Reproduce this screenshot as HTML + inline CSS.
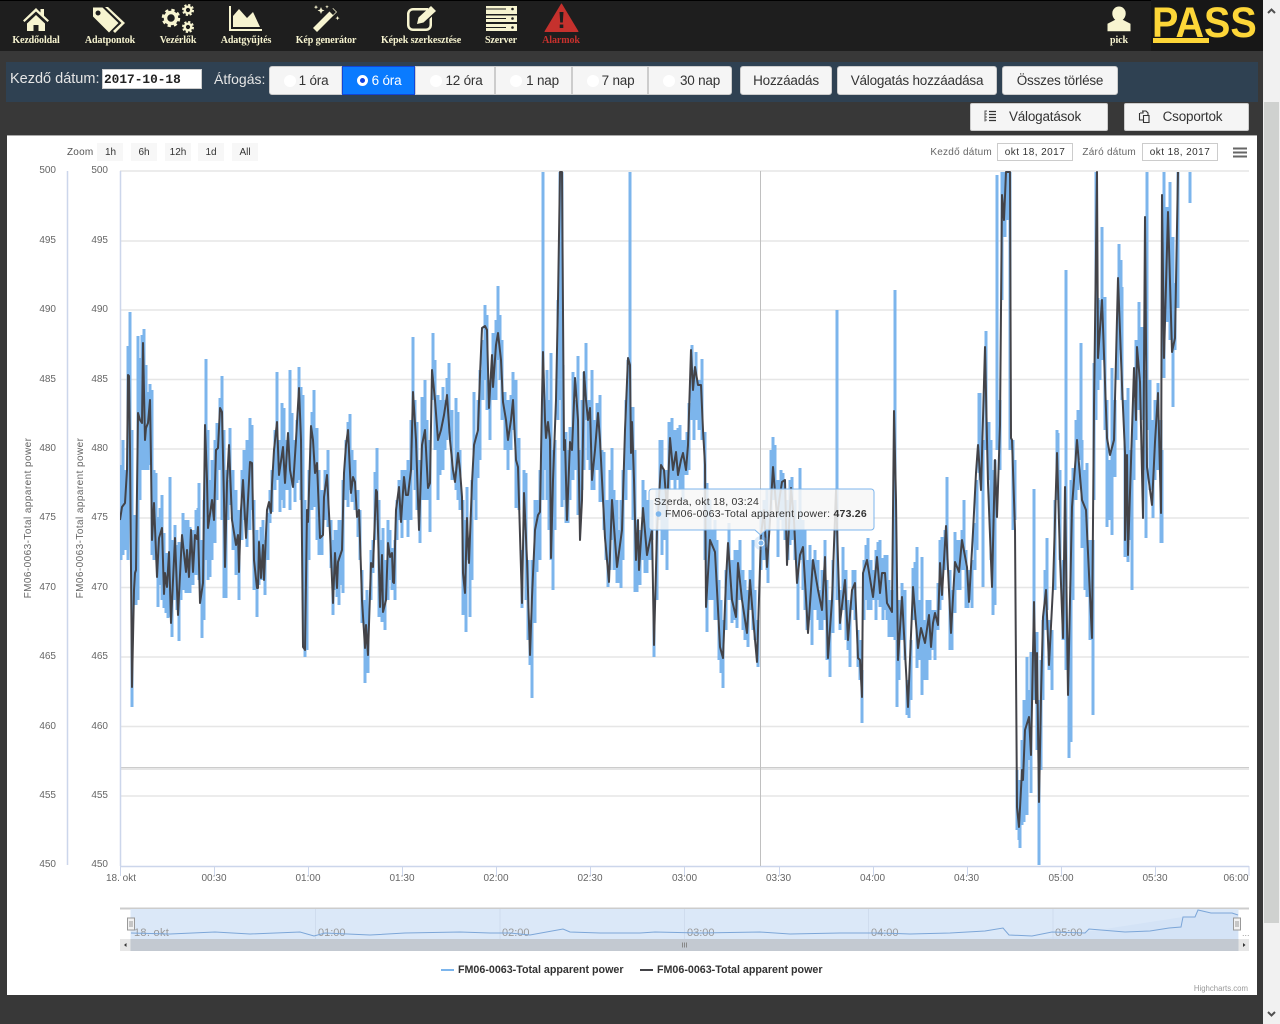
<!DOCTYPE html>
<html lang="hu"><head><meta charset="utf-8"><title>PASS</title>
<style>
html,body{margin:0;padding:0;width:1280px;height:1024px;overflow:hidden;background:#383838;font-family:"Liberation Sans",sans-serif}
div{box-sizing:border-box;position:absolute}
.nav{font:bold 10px "Liberation Serif",serif;color:#f7f4d0;top:35px;height:12px;line-height:12px;text-align:center;white-space:nowrap;letter-spacing:-.1px}
.btn{top:66px;height:29px;line-height:27px;background:#f5f5f5;border:1px solid #ccc;color:#333;font-size:13.500px;text-align:center;white-space:nowrap;letter-spacing:-.2px}
.rd{position:absolute;left:14px;top:8px;width:12px;height:12px;border-radius:50%;background:#fff}
svg text{font-family:"Liberation Sans",sans-serif}
</style></head><body>
<div style="left:0;top:0;width:1280px;height:51px;background:#1e1e1e;border-top:1px solid #000"></div>
<svg style="position:absolute;left:0;top:0" width="1262" height="51" viewBox="0 0 1262 51">
<g fill="#f7f4d0">
<path d="M36 8 23 20.500l1.500 1.500L36 11.500 47.500 22l1.500-1.500-5-4.700V9h-3.500v3.500zM27 23.500 36 15l9 8.500V31H38.500v-6h-5v6H27z"/>
<path d="M93 7.500h9.500l16 15.500-9.500 9.500L93 16.500zM98 10.500a2.500 2.500 0 1 0 .1 0zM105 7h3l17 16-10 10-2-2 8.500-8z" fill-rule="evenodd"/>
<path d="M229 6h2v23h31v2h-33z"/><path d="M233 27V16l6-7 8 9 6-6 7 15z"/>
<path d="M313 28 333 8l4 4-20 20zM329.500 11.500l3.500 3.500 3-3-3.500-3.500z" fill-rule="evenodd"/>
<path d="M321 7l1 2.500 2.500 1-2.500 1-1 2.500-1-2.500-2.500-1 2.500-1zM316 5l.6 1.500 1.500.6-1.500.6-.6 1.500-.6-1.500-1.500-.6 1.500-.6zM337.500 16l.6 1.500 1.500.6-1.500.6-.6 1.500-.6-1.500-1.500-.6 1.500-.6zM327 5l.5 1.300 1.300.5-1.300.5-.5 1.300-.5-1.300-1.300-.5 1.300-.5z"/>
<path d="M413 8h15v2.500h-15a3.500 3.500 0 0 0-3.500 3.500v11a3.500 3.500 0 0 0 3.500 3.500h13a3.500 3.500 0 0 0 3.500-3.500v-6l2.500-2.500V25a6 6 0 0 1-6 6h-13a6 6 0 0 1-6-6V14a6 6 0 0 1 6-6z"/>
<path d="M417 24l1.500-6.500L431 6l5 5-12.500 11.500z"/>
<path d="M486 6h31v8h-31zM486 15.500h31v6.500h-31zM486 24h31v7h-31z"/>
<path d="M1119 6.500a6.700 6.700 0 0 1 6.700 7c0 2.700-1.400 5.200-3 6.300l7.800 4v7.500h-23v-7.500l7.800-4c-1.600-1.100-3-3.600-3-6.300a6.700 6.700 0 0 1 6.700-7z"/>
</g>
<g fill="none" stroke="#f7f4d0">
<circle cx="171" cy="18" r="5.500" stroke-width="3.500"/>
<circle cx="171" cy="18" r="8" stroke-width="2.500" stroke-dasharray="3.300 3"/>
<circle cx="188" cy="10" r="3.300" stroke-width="2.400"/>
<circle cx="188" cy="10" r="5" stroke-width="2" stroke-dasharray="2.200 1.730"/>
<circle cx="188" cy="27" r="3.300" stroke-width="2.400"/>
<circle cx="188" cy="27" r="5" stroke-width="2" stroke-dasharray="2.200 1.730"/>
</g>
<g fill="#1e1e1e"><circle cx="512.500" cy="9" r="1.300"/><circle cx="512.500" cy="18.500" r="1.300"/><circle cx="512.500" cy="27.500" r="1.300"/><path d="M486 8.500h20v1h-20zM486 18h20v1h-20zM486 27h20v1h-20z"/></g>
<path d="M561.500 4 578 31.500h-33z" fill="#c5312d" stroke="#c5312d" stroke-width="1" stroke-linejoin="round"/>
<path d="M559.500 12h4l-.7 10.500h-2.600zM559.700 24.500h3.600v3.500h-3.600z" fill="#1e1e1e"/>
</svg>
<div class="nav" style="left:0;width:72px">Kezdőoldal</div>
<div class="nav" style="left:70px;width:80px">Adatpontok</div>
<div class="nav" style="left:148px;width:60px">Vezérlők</div>
<div class="nav" style="left:211px;width:70px">Adatgyűjtés</div>
<div class="nav" style="left:276px;width:100px">Kép generátor</div>
<div class="nav" style="left:361px;width:120px">Képek szerkesztése</div>
<div class="nav" style="left:471px;width:60px">Szerver</div>
<div class="nav" style="left:531px;width:60px;color:#c5312d">Alarmok</div>
<div class="nav" style="left:1099px;width:40px">pick</div>
<div style="left:1151px;top:-1px;width:112px;height:52px;background:#171717;overflow:hidden">
<div style="left:1px;top:0;font:bold 43px/48px 'Liberation Sans',sans-serif;color:#fdd638;white-space:nowrap;width:130px;transform:scaleX(.92);transform-origin:0 0">PASS</div>
<div style="left:2px;top:39px;width:56px;height:5px;background:#fdd638"></div>
</div>

<div style="left:6px;top:62px;width:1252px;height:40px;background:#2f4152"></div>
<div style="left:10px;top:70px;color:#e6e6e6;font-size:14.500px;line-height:18px;white-space:nowrap">Kezdő dátum:</div>
<div style="left:102px;top:69px;width:100px;height:20px;background:#fff;border:1px solid #ccc;font:bold 12.800px/19px 'Liberation Mono',monospace;color:#222;padding-left:1px;white-space:nowrap">2017-10-18</div>
<div style="left:214px;top:70px;color:#e6e6e6;font-size:14px;line-height:18px;white-space:nowrap">Átfogás:</div>
<div class="btn" style="left:269px;width:73px;padding-left:16px;border-radius:3px 0 0 3px"><span class="rd"></span>1 óra</div>
<div class="btn" style="left:342px;width:73px;padding-left:16px;background:#0a7bff;border:1px solid #1346d6;color:#fff"><span class="rd" style="left:14px;width:11px;height:11px;border:3px solid #fff;background:#1040e0;box-sizing:border-box"></span>6 óra</div>
<div class="btn" style="left:415px;width:80px;padding-left:18px"><span class="rd"></span>12 óra</div>
<div class="btn" style="left:495px;width:77px;padding-left:18px"><span class="rd"></span>1 nap</div>
<div class="btn" style="left:572px;width:76px;padding-left:16px"><span class="rd"></span>7 nap</div>
<div class="btn" style="left:648px;width:84px;padding-left:20px;border-radius:0 3px 3px 0"><span class="rd"></span>30 nap</div>
<div class="btn" style="left:740px;width:92px;border-radius:3px">Hozzáadás</div>
<div class="btn" style="left:837px;width:160px;border-radius:3px">Válogatás hozzáadása</div>
<div class="btn" style="left:1002px;width:116px;border-radius:3px">Összes törlése</div>
<div class="btn" style="left:970px;top:103px;width:138px;height:28px;line-height:25px;padding-left:12px;border-radius:2px">Válogatások</div>
<div class="btn" style="left:1124px;top:103px;width:125px;height:28px;line-height:25px;padding-left:12px;border-radius:2px">Csoportok</div>
<svg style="position:absolute;left:980px;top:106px" width="180" height="22" viewBox="980 106 180 22">
<path d="M989 111.500h7M989 114.500h7M989 117.500h7M989 120.500h7" stroke="#333" stroke-width="1.300"/><path d="M985 110.500v11M985.500 111h1.500M985.500 114h1.500M985.500 117h1.500M985.500 120h1.500" stroke="#555" stroke-width="1"/>
<path d="M1139.500 113v7h4M1142 111h4l2 2v2M1143.500 115.500h5.500v7h-5.500zM1140 113h3v-2" fill="none" stroke="#333" stroke-width="1.100"/>
</svg>

<div style="left:7px;top:135px;width:1250px;height:860px;background:#fff;border-top:1px solid #aaa"></div>

<svg style="position:absolute;left:0;top:0" width="1262" height="1000" viewBox="0 0 1262 1000">
<defs><clipPath id="pl"><rect x="120" y="171" width="1129" height="695"/></clipPath></defs>
<g font-size="10" fill="#333">
<text x="67" y="155" fill="#555" letter-spacing=".2">Zoom</text>
<g fill="#f7f7f7"><rect x="97" y="143" width="26" height="18"/><rect x="131" y="143" width="26" height="18"/><rect x="165" y="143" width="26" height="18"/><rect x="198" y="143" width="26" height="18"/><rect x="232" y="143" width="26" height="18"/></g>
<g text-anchor="middle"><text x="110.500" y="155">1h</text><text x="144" y="155">6h</text><text x="178" y="155">12h</text><text x="211" y="155">1d</text><text x="245" y="155">All</text></g>
<g fill="#666"><text x="992" y="155" text-anchor="end" font-size="10" letter-spacing=".25">Kezdő dátum</text><text x="1136" y="155" text-anchor="end" letter-spacing=".25">Záró dátum</text></g>
<rect x="997.500" y="143.500" width="75" height="17" fill="#fff" stroke="#ccc"/><rect x="1142.500" y="143.500" width="75" height="17" fill="#fff" stroke="#ccc"/>
<text x="1035" y="155" text-anchor="middle" letter-spacing=".45">okt 18, 2017</text><text x="1180" y="155" text-anchor="middle" letter-spacing=".45">okt 18, 2017</text>
</g>
<path d="M1233 148.500h14M1233 152.500h14M1233 156.500h14" stroke="#666" stroke-width="2"/>

<path d="M120 171H1249M120 241H1249M120 310H1249M120 379.500H1249M120 449H1249M120 518H1249M120 587.500H1249M120 657H1249M120 726.500H1249M120 796H1249" stroke="#e6e6e6" stroke-width="1.500"/>
<path d="M120 767.500H1249M120 769H1249" stroke="#ccc" stroke-width="1"/>
<path d="M67.500 171V865M120.500 171V866M120 866.500H1249" stroke="#ccd6eb" stroke-width="1.500" fill="none"/>
<path d="M120.500 866v10M214.500 866v10M308.500 866v10M402.500 866v10M496.500 866v10M590.500 866v10M684.500 866v10M779.500 866v10M873.500 866v10M967.500 866v10M1061.500 866v10M1155.500 866v10M1249 866v10" stroke="#ccd6eb"/>
<g font-size="10" fill="#666" text-anchor="end">
<text x="56" y="173">500</text><text x="56" y="243">495</text><text x="56" y="312">490</text><text x="56" y="382">485</text><text x="56" y="451">480</text><text x="56" y="520">475</text><text x="56" y="590">470</text><text x="56" y="659">465</text><text x="56" y="729">460</text><text x="56" y="798">455</text><text x="56" y="867">450</text>
<text x="108" y="173">500</text><text x="108" y="243">495</text><text x="108" y="312">490</text><text x="108" y="382">485</text><text x="108" y="451">480</text><text x="108" y="520">475</text><text x="108" y="590">470</text><text x="108" y="659">465</text><text x="108" y="729">460</text><text x="108" y="798">455</text><text x="108" y="867">450</text>
</g>
<g font-size="10" fill="#666" text-anchor="middle" letter-spacing=".43"><text transform="translate(31 518) rotate(-90)">FM06-0063-Total apparent power</text><text transform="translate(83 518) rotate(-90)">FM06-0063-Total apparent power</text></g>
<g font-size="10" fill="#666" text-anchor="middle"><text x="121" y="881">18. okt</text><text x="214" y="881">00:30</text><text x="308" y="881">01:00</text><text x="402" y="881">01:30</text><text x="496" y="881">02:00</text><text x="590" y="881">02:30</text><text x="684.500" y="881">03:00</text><text x="778.500" y="881">03:30</text><text x="872.500" y="881">04:00</text><text x="966.500" y="881">04:30</text><text x="1061" y="881">05:00</text><text x="1155" y="881">05:30</text><text x="1236" y="881" text-anchor="middle">06:00</text></g>

<path d="M760.500 171V866" stroke="#c0c0c0" stroke-width="1"/>
<g clip-path="url(#pl)">
<path fill="none" stroke="#7cb5ec" stroke-width="3" d="M121 465V560M123 440V555M125 470V550M128 346V560M130 312V500M132 430V707M134 515V600M136 515V605M138 336V600M140 358V500M142 335V470M144 329V470M146 365V470M148 392V470M150 384V465M152 390V555M154 470V560M156 473V555M158 517V607M160 508V585M162 495V600M164 533V608M166 553V613M168 553V618M170 477V617M172 540V637M175 525V600M177 545V610M179 542V641M181 560V600M183 513V590M186 520V593M188 520V593M190 527V593M193 530V585M196 510V575M198 508V570M199 483V580M202 540V638M204 500V620M206 359V560M208 430V580M210 480V577M212 460V560M215 440V543M217 423V500M220 398V470M222 376V520M224 430V598M226 470V598M228 480V520M230 428V505M233 470V550M236 490V575M239 510V600M242 470V540M244 450V520M247 440V547M250 418V530M252 425V510M254 500V590M257 530V617M259 540V585M261 527V580M263 520V580M265 540V595M268 513V560M270 490V523M272 470V512M275 430V490M277 372V480M280 440V512M282 403V500M284 408V508M287 440V490M290 370V510M292 413V480M295 440V502M297 420V483M299 367V480M301 387V500M303 395V600M305 500V657M307 510V650M309 470V560M311 440V500M312 412V510M314 390V507M317 428V540M319 470V555M322 490V555M325 470V520M328 450V527M331 520V568M333 540V615M335 530V590M337 530V597M339 520V605M341 520V585M343 480V593M346 440V500M348 422V507M350 414V490M352 450V502M355 460V510M358 490V537M360 510V560M362 570V623M365 600V683M367 590V640M368 620V673M371 550V600M373 540V573M375 472V540M377 448V520M379 500V617M382 540V622M383 528V600M385 560V630M388 520V600M390 530V580M392 548V590M395 540V600M397 500V540M399 480V520M402 470V538M405 470V520M408 460V537M411 420V520M413 337V470M415 400V490M417 422V510M420 460V543M422 397V500M425 380V500M427 420V500M430 440V532M433 333V400M435 360V450M438 395V500M440 400V475M443 387V470M445 400V450M447 378V440M449 363V430M452 410V480M456 398V490M458 412V500M460 450V510M463 500V615M466 520V632M467 487V560M470 540V617M472 480V580M474 392V500M476 440V520M478 400V478M480 370V460M483 340V400M485 305V380M487 315V410M490 380V440M493 333V400M496 320V400M498 286V360M500 315V380M502 340V420M505 392V450M508 400V470M511 395V450M513 372V430M516 380V508M519 438V510M522 550V608M524 470V530M526 473V600M528 560V640M530 620V665M532 560V698M535 500V623M537 500V572M540 470V560M543 172V500M545 400V470M547 370V500M549 400V530M551 353V560M553 450V590M555 440V530M558 300V420M560 172V400M562 172V507M563 365V500M566 432V523M568 450V523M570 427V500M573 372V480M575 400V470M578 356V515M580 450V515M582 400V490M584 372V470M586 343V420M588 400V460M590 400V470M592 370V490M594 420V490M597 403V470M600 395V502M602 450V502M604 452V530M606 500V560M608 500V587M610 470V570M612 448V540M614 490V570M617 500V583M619 530V583M621 500V588M623 470V560M626 400V500M628 360V470M630 172V470M633 407V520M635 450V592M637 520V592M640 530V585M643 480V560M645 490V573M647 500V573M650 500V560M652 500V540M654 600V657M657 490V600M660 440V520M662 440V555M664 470V540M667 470V570M669 422V490M672 418V480M675 430V490M678 428V480M680 425V490M683 440V500M685 440V475M687 432V475M689 403V470M692 345V420M694 370V440M696 352V420M699 380V430M702 359V440M705 432V560M707 483V632M710 500V600M713 530V600M715 520V620M717 540V620M719 580V660M721 600V673M723 620V688M726 570V630M729 523V600M732 560V623M735 550V620M737 550V628M740 540V600M743 570V630M745 580V640M748 590V647M750 570V610M753 540V630M755 590V640M758 620V667M761 510V570M764 500V560M767 490V570M768 510V583M771 450V510M773 437V500M775 445V500M778 480V557M781 470V520M783 473V530M785 490V540M788 500V560M790 480V545M792 477V540M795 500V560M798 520V620M800 468V560M803 520V590M805 530V610M807 560V630M810 545V620M812 560V645M815 550V610M818 560V620M820 590V630M822 570V630M825 540V620M827 580V660M830 600V677M833 560V633M837 310V600M840 590V630M843 547V610M846 570V640M848 600V650M850 610V667M853 570V610M855 570V620M858 630V667M860 640V680M862 670V723M864 560V620M866 545V600M868 538V610M871 560V610M874 570V600M876 550V620M878 542V600M880 540V607M883 558V620M885 555V610M887 555V620M889 580V637M892 590V637M895 290V640M897 640V707M899 600V680M902 583V640M905 590V660M907 680V715M909 680V718M911 640V700M913 568V620M915 562V620M917 547V668M920 600V660M922 557V695M925 620V680M927 600V680M930 600V660M932 610V650M935 610V660M938 583V630M940 540V610M942 537V600M945 530V570M947 477V560M950 570V650M952 590V650M955 532V613M957 540V590M960 540V590M962 530V570M964 500V570M966 550V608M968 570V608M970 570V600M972 560V608M975 523V570M977 480V550M979 393V473M980 393V480M983 440V587M986 331V450M989 422V480M991 440V560M993 470V615M995 460V605M997 175V450M1000 400V470M1002 172V300M1005 172V237M1007 172V220M1010 172V450M1013 440V530M1015 460V520M1017 770V830M1019 780V840M1020 800V848M1022 740V825M1024 700V822M1027 657V815M1029 690V760M1031 652V793M1034 489V700M1037 632V750M1039 700V865M1041 660V770M1043 620V700M1045 570V630M1047 538V610M1049 620V670M1052 630V690M1055 500V590M1057 430V480M1058 433V500M1060 470V560M1063 560V640M1066 270V670M1069 640V758M1071 480V742M1073 468V600M1076 420V500M1078 410V490M1081 343V460M1082 440V548M1085 470V590M1087 463V597M1090 540V640M1093 540V715M1094 363V500M1096 172V420M1098 298V390M1100 300V380M1102 227V360M1105 297V430M1107 400V527M1109 460V520M1112 368V535M1115 400V477M1118 300V380M1119 244V340M1121 260V350M1122 287V400M1125 400V557M1128 388V562M1130 450V540M1132 450V590M1134 400V480M1136 340V440M1139 302V410M1142 327V420M1144 370V470M1146 400V538M1147 172V430M1150 380V490M1153 420V518M1155 400V480M1158 383V470M1161 420V543M1162 450V543M1164 172V378M1167 207V322M1170 182V340M1173 237V407M1175 283V350M1178 172V308M1190 172V203"/>
<polyline fill="none" stroke="#434348" stroke-width="2" stroke-linejoin="round" points="120,520 122,507 125,503 127,470 128,375 129,376 130,450 132,687 134,590 135,573 136,570 138,413 140,420 142,423 143,343 145,440 146,428 148,423 150,400 151,460 152,540 154,503 157,577 159,538 162,528 164,594 165,573 167,587 169,552 171,623 175,538 178,615 182,535 186,572 187,550 189,577 191,530 193,572 195,535 197,539 198,527 200,603 203,583 205,425 207,480 208,528 212,500 214,520 216,450 218,448 220,408 222,412 224,500 225,567 227,483 229,445 232,520 236,545 238,535 239,572 241,510 243,480 246,538 250,462 252,463 254,560 257,588 258,588 259,542 261,578 263,545 264,580 267,510 269,502 271,513 272,485 274,450 277,422 279,475 283,447 285,483 288,433 290,470 293,487 296,440 299,388 301,440 303,647 305,650 307,510 308,522 311,426 313,440 315,473 317,463 320,538 323,535 324,497 327,475 330,533 333,603 335,553 337,588 338,562 342,550 344,473 346,445 348,430 351,493 353,477 355,482 357,517 359,510 362,600 365,648 366,625 368,655 371,563 373,567 376,490 377,492 380,607 382,555 383,612 386,600 388,543 390,557 392,553 393,582 394,583 396,510 399,487 401,522 404,477 406,495 408,495 411,470 413,392 416,440 419,530 422,445 425,430 428,488 430,483 432,370 435,400 438,440 441,430 444,415 447,395 450,440 453,470 455,482 458,453 460,470 462,497 463,573 465,593 467,518 469,563 472,483 474,445 478,430 480,375 482,328 485,326 487,330 489,408 492,355 493,387 496,345 498,333 501,360 503,402 506,420 508,440 511,420 513,400 516,460 518,467 522,603 524,493 527,560 530,655 532,597 535,530 538,515 540,512 542,400 543,352 545,420 546,438 548,422 550,440 551,558 553,480 556,400 558,300 560,172 562,172 564,450 565,440 567,520 570,442 572,450 575,378 578,420 580,540 582,500 584,372 586,400 588,420 590,408 592,480 595,450 598,413 600,440 602,480 605,538 609,582 612,500 617,567 622,530 625,430 628,358 630,365 631,453 632,422 634,480 636,560 638,520 639,570 643,508 647,555 652,530 654,645 657,530 661,465 664,470 667,510 670,438 673,470 676,452 678,475 681,460 683,453 686,470 688,445 691,350 693,390 695,367 698,385 701,385 703,430 705,465 706,607 710,540 715,552 720,647 723,658 726,580 728,543 732,600 736,617 738,563 742,600 747,633 750,580 753,617 757,662 761,535 764,510 767,567 770,520 773,467 777,517 780,495 782,482 785,480 787,565 791,488 794,520 797,583 800,555 803,547 808,633 813,560 818,590 822,610 825,557 828,658 832,600 836,490 838,560 840,623 845,580 848,640 852,590 855,583 858,658 860,660 862,697 863,573 867,560 873,597 877,557 880,593 882,573 885,573 887,603 892,612 894,411 896,500 898,660 902,597 908,707 913,587 918,648 921,628 925,643 929,615 931,647 933,623 935,613 938,625 940,563 942,595 946,526 951,633 955,562 959,572 962,540 967,567 969,602 973,532 976,473 978,445 981,490 985,347 987,440 988,483 992,587 995,460 997,517 1000,425 1002,195 1004,220 1006,172 1010,172 1011,438 1012,440 1015,530 1017,807 1019,827 1022,770 1023,780 1025,730 1029,717 1031,755 1034,602 1036,703 1037,653 1039,802 1041,697 1043,617 1046,590 1049,665 1053,587 1057,453 1060,557 1063,638 1065,487 1068,695 1072,507 1077,440 1082,500 1086,510 1092,638 1094,407 1097,172 1098,358 1102,300 1103,327 1107,438 1110,455 1114,440 1118,278 1122,385 1125,453 1125,540 1127,455 1128,555 1134,368 1136,420 1137,347 1140,382 1143,518 1145,217 1147,467 1152,505 1155,442 1158,393 1161,513 1162,195 1164,358 1168,212 1172,352 1175,338 1178,172"/>
</g>
<circle cx="761" cy="543" r="7" fill="#7cb5ec" opacity=".25"/><circle cx="761" cy="543" r="3" fill="#7cb5ec" stroke="#fff"/>
<path d="M649 492a3 3 0 0 1 3-3H871a3 3 0 0 1 3 3V527a3 3 0 0 1-3 3H766l-5.500 5-5.500-5H652a3 3 0 0 1-3-3z" fill="#f7f7f7" fill-opacity=".85" stroke="#7cb5ec"/>
<text x="654" y="505" font-size="10.500" fill="#333" letter-spacing=".25">Szerda, okt 18, 03:24</text>
<circle cx="658.500" cy="514" r="2.800" fill="#7cb5ec"/>
<text x="665" y="517" font-size="10.500" fill="#333" letter-spacing=".23">FM06-0063-Total apparent power: <tspan font-weight="bold">473.26</tspan></text>

<path d="M120 908.500H1249" stroke="#ccc" stroke-width="2"/>
<rect x="130.500" y="909" width="1108" height="30" fill="#dbe8f8"/>
<path d="M315.500 909v30M500 909v30M684.500 909v30M868.500 909v30M1053 909v30" stroke="#cfdcee"/>
<path fill="#cfe0f5" opacity=".6" d="M1183 917 1195 917 1198 910 1211 913 1232 913 1238 915V939H1040z"/>
<g font-size="11" fill="#999"><text x="134" y="936" letter-spacing=".3">18. okt</text><text x="318" y="936">01:00</text><text x="502" y="936">02:00</text><text x="687" y="936">03:00</text><text x="871" y="936">04:00</text><text x="1055" y="936">05:00</text></g>
<polyline fill="none" stroke="#7ca6d8" stroke-width="1" points="131,933 170,934 215,932 250,934 300,932 314,936 325,933 370,935 405,933 460,932 490,933 510,933 530,935 563,929 570,932 600,933 640,933 655,932 700,933 760,932 790,934 840,933 880,933 910,934 950,933 985,931 1003,928 1009,935 1032,936 1052,932 1085,933 1089,929 1125,932 1150,931 1169,928 1181,927 1183,917 1195,917 1198,910 1211,913 1232,913 1238,915"/>
<rect x="120" y="939" width="1129" height="12" fill="#c3c9d1"/>
<rect x="120" y="939" width="10.500" height="12" fill="#e6e6e6"/><rect x="1238.500" y="939" width="10.500" height="12" fill="#e6e6e6"/>
<path d="M126.500 943v4l-2.500-2zM1243 943v4l2.500-2z" fill="#333"/>
<path d="M682.500 942.500v5M684.500 942.500v5M686.500 942.500v5" stroke="#888"/>
<rect x="127.500" y="918" width="7" height="12" fill="#f2f2f2" stroke="#999"/><rect x="1233.500" y="918" width="7" height="12" fill="#f2f2f2" stroke="#999"/>
<path d="M130 921v6M132 921v6M1236 921v6M1238 921v6" stroke="#999"/>
<text x="1242" y="936" font-size="9" fill="#999">...</text>

<path d="M441 970h13" stroke="#7cb5ec" stroke-width="2"/><path d="M640 970h13" stroke="#434348" stroke-width="2"/>
<text x="458" y="973" font-size="10.700" font-weight="bold" fill="#333">FM06-0063-Total apparent power</text>
<text x="657" y="973" font-size="10.700" font-weight="bold" fill="#333">FM06-0063-Total apparent power</text>
<text x="1248" y="991" font-size="7.800" fill="#999" text-anchor="end">Highcharts.com</text>
</svg>

<div style="left:1263px;top:0;width:17px;height:1024px;background:#f1f1f1"></div>
<div style="left:1264px;top:102px;width:15px;height:821px;background:#cfd1cf"></div>
<svg style="position:absolute;left:1263px;top:0" width="17" height="1024" viewBox="0 0 17 1024"><path d="M5 13l3.500-3.500L12 13M5 1012l3.500 3.500L12 1012" fill="none" stroke="#505050" stroke-width="2"/></svg>
</body></html>
